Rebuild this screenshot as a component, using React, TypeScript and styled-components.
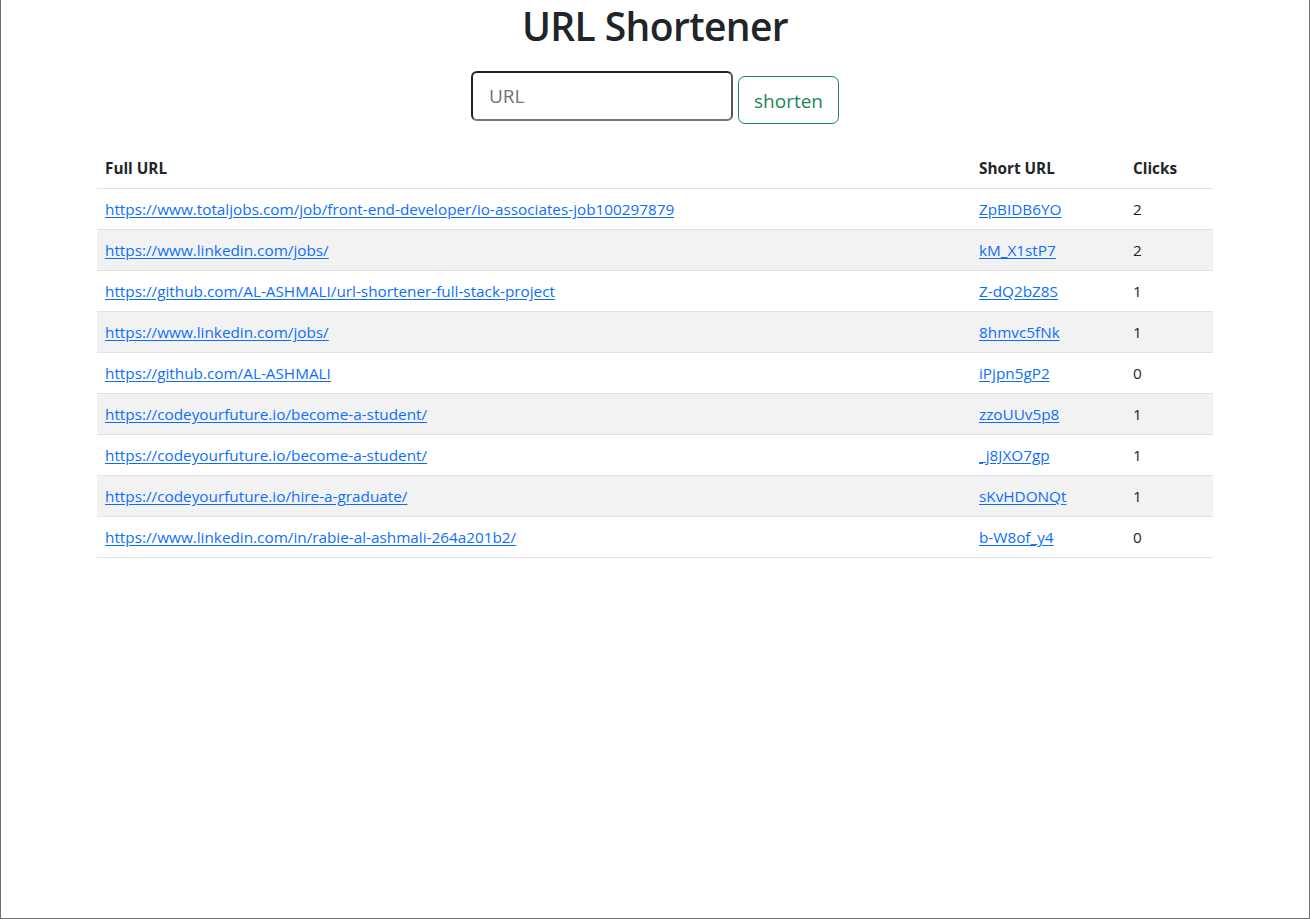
import React from "react";
import styled, { createGlobalStyle } from "styled-components";

const Global = createGlobalStyle`
  html, body { margin: 0; padding: 0; background: #fff; }
  body {
    font-family: "Open Sans", "Noto Sans", sans-serif;
    color: #212529;
    font-size: 16px;
    line-height: 1.5;
  }
  * { box-sizing: border-box; }
`;

const Frame = styled.div`
  width: 1310px;
  height: 919px;
  border: 1px solid #707070;
  border-top: none;
  overflow: hidden;
`;

const Container = styled.div`
  width: 1140px;
  margin: 0 auto;
  padding: 0 12px;
`;

const Title = styled.h1`
  margin: 3px 0 0;
  font-size: 39px;
  font-weight: 600;
  line-height: 1.2;
  text-align: center;
  letter-spacing: -0.6px;
`;

const Form = styled.form`
  display: flex;
  justify-content: center;
  align-items: flex-start;
  gap: 5px;
  margin-top: 21px;
`;

const Input = styled.input`
  width: 262px;
  height: 50px;
  padding: 8px 16px;
  font-family: inherit;
  font-size: 19px;
  border: 2px solid #222;
  border-bottom-color: #777;
  border-right-color: #555;
  border-radius: 6px;
  outline: none;
  &::placeholder { color: #6c757d; }
`;

const Button = styled.button`
  margin-top: 5px;
  width: 101px;
  height: 48px;
  font-family: inherit;
  font-size: 19px;
  color: #198754;
  background: #fff;
  border: 1px solid #198754;
  border-radius: 7px;
  padding: 0;
  line-height: 48px;
`;

const Table = styled.table`
  width: 100%;
  margin-top: 24px;
  border-collapse: collapse;
  table-layout: fixed;
  font-size: 15.3px;
`;

const Th = styled.th<{ $w?: number }>`
  text-align: left;
  font-weight: 700;
  padding: 8px;
  height: 41px;
  border-bottom: 1px solid #dee2e6;
  width: ${(p) => (p.$w ? `${p.$w}px` : "auto")};
`;

const Tr = styled.tr<{ $striped: boolean }>`
  background: ${(p) => (p.$striped ? "#f2f2f2" : "#fff")};
`;

const Td = styled.td`
  padding: 8px;
  height: 41px;
  border-bottom: 1px solid #dee2e6;
  white-space: nowrap;
`;

const Link = styled.a`
  color: #0d6efd;
  text-decoration: underline;
  text-underline-offset: 2px;
`;

const rows = [
  ["https://www.totaljobs.com/job/front-end-developer/io-associates-job100297879", "ZpBIDB6YO", 2],
  ["https://www.linkedin.com/jobs/", "kM_X1stP7", 2],
  ["https://github.com/AL-ASHMALI/url-shortener-full-stack-project", "Z-dQ2bZ8S", 1],
  ["https://www.linkedin.com/jobs/", "8hmvc5fNk", 1],
  ["https://github.com/AL-ASHMALI", "iPjpn5gP2", 0],
  ["https://codeyourfuture.io/become-a-student/", "zzoUUv5p8", 1],
  ["https://codeyourfuture.io/become-a-student/", "_j8JXO7gp", 1],
  ["https://codeyourfuture.io/hire-a-graduate/", "sKvHDONQt", 1],
  ["https://www.linkedin.com/in/rabie-al-ashmali-264a201b2/", "b-W8of_y4", 0],
] as const;

export default function App() {
  return (
    <Frame>
      <Global />
      <Container>
        <Title>URL Shortener</Title>
        <Form onSubmit={(e) => e.preventDefault()}>
          <Input placeholder="URL" />
          <Button type="submit">shorten</Button>
        </Form>
        <Table>
          <thead>
            <tr>
              <Th>Full URL</Th>
              <Th $w={154}>Short URL</Th>
              <Th $w={88}>Clicks</Th>
            </tr>
          </thead>
          <tbody>
            {rows.map(([full, short, clicks], i) => (
              <Tr key={i} $striped={i % 2 === 1}>
                <Td>
                  <Link href="#">{full}</Link>
                </Td>
                <Td>
                  <Link href="#">{short}</Link>
                </Td>
                <Td>{clicks}</Td>
              </Tr>
            ))}
          </tbody>
        </Table>
      </Container>
    </Frame>
  );
}
